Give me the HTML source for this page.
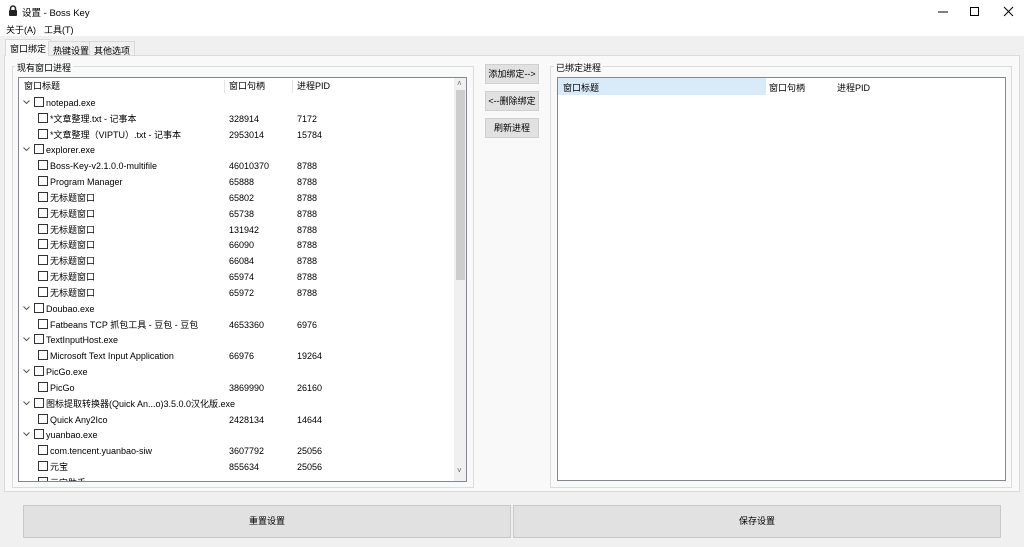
<!DOCTYPE html><html><head><meta charset="utf-8"><style>
*{box-sizing:border-box;margin:0;padding:0}
body{width:1024px;height:547px;overflow:hidden;background:#f0f0f0;font-family:"Liberation Sans","Noto Sans CJK SC",sans-serif;font-size:9px;color:#000;position:relative}
.a{position:absolute}
.title{left:0;top:0;width:1024px;height:22px;background:#fff}
.menu{left:0;top:22px;width:1024px;height:14px;background:#fff}
.page{left:4px;top:55px;width:1016px;height:437px;background:#f9f9f9;border:1px solid #dcdcdc}
.tab{top:41px;height:15px;background:#f0f0f0;border:1px solid #d9d9d9;padding:2px 4px;font-size:9px}
.gb{border:1px solid #dcdcdc}
.gl{background:#f9f9f9;padding:0 2px;font-size:9px}
.lb{background:#fff;border:1px solid #828790;overflow:hidden}
.btn{background:#e1e1e1;border:1px solid #d0d0d0;text-align:center;line-height:18px;font-size:9px}
.row{position:absolute;left:0;height:16px;line-height:16px;white-space:nowrap;font-size:9px}
.cb{display:inline-block;width:10px;height:10px;border:1px solid #333;vertical-align:-1px;margin-right:2px;background:#fff}
.big{background:#e1e1e1;border:1px solid #c8c8c8;text-align:center;line-height:31px;font-size:9px}
</style></head><body>
<div class="a title">
<svg class="a" style="left:8px;top:5px" width="10" height="11" viewBox="0 0 10 11"><path d="M2.5 5V3.5a2.5 2.5 0 0 1 5 0V5" fill="none" stroke="#222" stroke-width="1.5"/><rect x="1" y="5" width="8" height="6" rx="1" fill="#222"/></svg>
<span class="a" style="left:22px;top:5px;font-size:9.5px">设置 - Boss Key</span>
<svg class="a" style="left:937px;top:6px" width="80" height="12"><path d="M1 6h10" stroke="#000"/><rect x="33.5" y="1.5" width="8" height="8" fill="none" stroke="#000"/><path d="M67 1l9 9M76 1l-9 9" stroke="#000"/></svg>
</div>
<div class="a menu"><span class="a" style="left:6px;top:1px">关于(A)</span><span class="a" style="left:44px;top:1px">工具(T)</span></div>
<div class="a page"></div>
<div class="a tab" style="left:5px;top:39px;height:17px;background:#f9f9f9;border-bottom:none">窗口绑定</div>
<div class="a tab" style="left:48px">热键设置</div>
<div class="a tab" style="left:89px">其他选项</div>
<div class="a gb" style="left:12px;top:66px;width:462px;height:422px"></div>
<span class="a gl" style="left:15px;top:61px">现有窗口进程</span>
<div class="a lb" style="left:18px;top:77px;width:449px;height:405px">
<div class="a" style="left:0;top:0;width:435px;height:17px;line-height:17px"><span class="a" style="left:5px">窗口标题</span><span class="a" style="left:210px">窗口句柄</span><span class="a" style="left:278px">进程PID</span><span class="a" style="left:205px;top:2px;height:13px;border-left:1px solid #e5e5e5"></span><span class="a" style="left:273px;top:2px;height:13px;border-left:1px solid #e5e5e5"></span></div>
<div class="a" style="left:435px;top:0;width:13px;height:404px;background:#f0f0f0"><span class="a" style="left:3px;top:1px;font-size:8px;color:#666">˄</span><div class="a" style="left:2px;top:12px;width:9px;height:190px;background:#cdcdcd"></div><span class="a" style="left:3px;top:388px;font-size:8px;color:#666">˅</span></div>
<div id="rows"></div>
</div>
<div class="a btn" style="left:485px;top:64px;width:54px;height:20px">添加绑定--&gt;</div>
<div class="a btn" style="left:485px;top:91px;width:54px;height:20px">&lt;--删除绑定</div>
<div class="a btn" style="left:485px;top:118px;width:54px;height:20px">刷新进程</div>
<div class="a gb" style="left:550px;top:66px;width:462px;height:422px"></div>
<span class="a gl" style="left:554px;top:61px">已绑定进程</span>
<div class="a lb" style="left:557px;top:77px;width:449px;height:404px">
<div class="a" style="left:0;top:0;width:208px;height:17px;background:#d9ebf9"></div>
<span class="a" style="left:5px;top:3px">窗口标题</span><span class="a" style="left:211px;top:3px">窗口句柄</span><span class="a" style="left:279px;top:3px">进程PID</span>
</div>
<div class="a big" style="left:23px;top:505px;width:488px;height:33px">重置设置</div>
<div class="a big" style="left:513px;top:505px;width:488px;height:33px">保存设置</div>
<script>
var d=[[0,"notepad.exe"],[1,"*文章整理.txt - 记事本","328914","7172"],[1,"*文章整理（VIPTU）.txt - 记事本","2953014","15784"],[0,"explorer.exe"],[1,"Boss-Key-v2.1.0.0-multifile","46010370","8788"],[1,"Program Manager","65888","8788"],[1,"无标题窗口","65802","8788"],[1,"无标题窗口","65738","8788"],[1,"无标题窗口","131942","8788"],[1,"无标题窗口","66090","8788"],[1,"无标题窗口","66084","8788"],[1,"无标题窗口","65974","8788"],[1,"无标题窗口","65972","8788"],[0,"Doubao.exe"],[1,"Fatbeans TCP 抓包工具 - 豆包 - 豆包","4653360","6976"],[0,"TextInputHost.exe"],[1,"Microsoft Text Input Application","66976","19264"],[0,"PicGo.exe"],[1,"PicGo","3869990","26160"],[0,"图标提取转换器(Quick An...o)3.5.0.0汉化版.exe"],[1,"Quick Any2Ico","2428134","14644"],[0,"yuanbao.exe"],[1,"com.tencent.yuanbao-siw","3607792","25056"],[1,"元宝","855634","25056"],[1,"元宝助手","",""]];
var h="";d.forEach(function(r,i){var t=17+i*15.83;if(r[0]==0){h+='<div class="row" style="top:'+t+'px;left:4px"><svg width="7" height="5" style="margin-right:4px;vertical-align:1px"><path d="M0.5 0.5l3 3 3-3" fill="none" stroke="#555"/></svg><span class="cb"></span>'+r[1]+'</div>'}else{h+='<div class="row" style="top:'+t+'px;left:19px"><span class="cb"></span>'+r[1]+'</div><div class="row" style="top:'+t+'px;left:210px">'+r[2]+'</div><div class="row" style="top:'+t+'px;left:278px">'+r[3]+'</div>'}});document.getElementById("rows").innerHTML=h;
</script>
</body></html>
